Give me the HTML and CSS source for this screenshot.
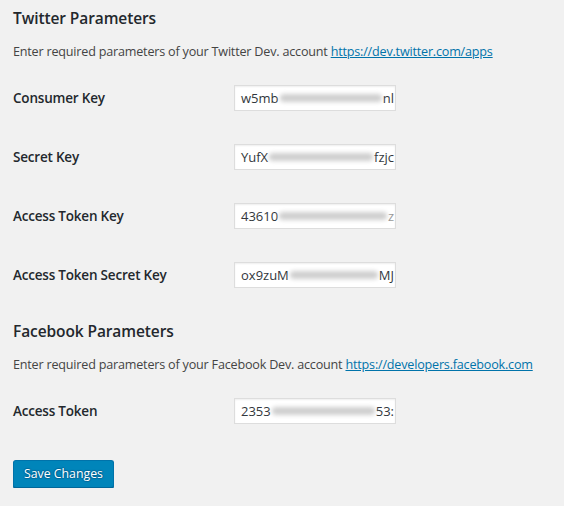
FILE: index.html
```html
<!DOCTYPE html>
<html lang="en">
<head>
<meta charset="utf-8">
<title>Social Parameters</title>
<link rel="stylesheet" href="styles.css">
</head>
<body>
<form class="settings">
  <section class="group">
    <h2 class="group-title">Twitter Parameters</h2>
    <p class="group-desc">Enter required parameters of your Twitter Dev. account <a href="#" class="link">https://dev.twitter.com/apps</a></p>
    <div class="field">
      <label class="field-label">Consumer Key</label>
      <div class="field-input"><span class="val">w5mb</span><span class="smudge"></span><span class="val tail">nl</span></div>
    </div>
    <div class="field">
      <label class="field-label">Secret Key</label>
      <div class="field-input"><span class="val">YufX</span><span class="smudge"></span><span class="val tail">fzjc</span></div>
    </div>
    <div class="field">
      <label class="field-label">Access Token Key</label>
      <div class="field-input"><span class="val">43610</span><span class="smudge"></span><span class="val tail faint">z</span></div>
    </div>
    <div class="field">
      <label class="field-label">Access Token Secret Key</label>
      <div class="field-input"><span class="val">ox9zuM</span><span class="smudge"></span><span class="val tail">MJ</span></div>
    </div>
  </section>
  <section class="group">
    <h2 class="group-title">Facebook Parameters</h2>
    <p class="group-desc">Enter required parameters of your Facebook Dev. account <a href="#" class="link">https://developers.facebook.com</a></p>
    <div class="field">
      <label class="field-label">Access Token</label>
      <div class="field-input"><span class="val">2353</span><span class="smudge"></span><span class="val tail">53:</span></div>
    </div>
  </section>
  <div class="actions">
    <button type="button" class="btn-primary">Save Changes</button>
  </div>
</form>
</body>
</html>
```
FILE: styles.css
```css
html, body {
  margin: 0;
  padding: 0;
  background: #f1f1f1;
}
body {
  font-family: "Open Sans", "Noto Sans", sans-serif;
  color: #444;
  font-size: 13px;
}
.settings {
  padding: 7px 13px 0;
}
.group + .group {
  margin-top: 16px;
}
.group-title {
  margin: 0;
  font-size: 15.5px;
  letter-spacing: -0.1px;
  line-height: 23px;
  font-weight: 600;
  color: #23282d;
}
.group-desc {
  margin: 13px 0 7px;
  font-size: 12.6px;
  letter-spacing: -0.2px;
  line-height: 18px;
  white-space: nowrap;
}
.link {
  color: #0073aa;
  text-decoration: underline;
}
.field {
  display: grid;
  grid-template-columns: 221px 162px;
  align-items: center;
  height: 59px;
}
.field-label {
  font-size: 13.5px;
  letter-spacing: -0.2px;
  font-weight: 600;
  color: #23282d;
}
.field-input {
  box-sizing: border-box;
  height: 26px;
  background: #fff;
  border: 1px solid #ddd;
  box-shadow: inset 0 1px 2px rgba(0,0,0,.07);
  display: flex;
  align-items: center;
  padding: 0 0 0 6px;
  overflow: hidden;
  white-space: nowrap;
  font-size: 13px;
  color: #32373c;
}
.val {
  flex: none;
}
.smudge {
  flex: 1;
  height: 8px;
  margin: 0 1px;
  background: #cfcfcf;
  border-radius: 4px;
  filter: blur(2px);
}
.tail {
  padding-right: 1px;
}
.faint {
  color: #999;
}
.actions {
  margin-top: 20px;
}
.btn-primary {
  box-sizing: border-box;
  height: 28px;
  padding: 0 10px;
  font-family: inherit;
  font-size: 12.3px;
  line-height: 26px;
  color: #fff;
  background: #0085ba;
  border: 1px solid #0073aa;
  border-bottom-color: #006799;
  border-radius: 3px;
  box-shadow: 0 1px 0 #006799;
  text-shadow: 0 -1px 1px #006799, 1px 0 1px #006799, 0 1px 1px #006799, -1px 0 1px #006799;
  cursor: pointer;
}
```
